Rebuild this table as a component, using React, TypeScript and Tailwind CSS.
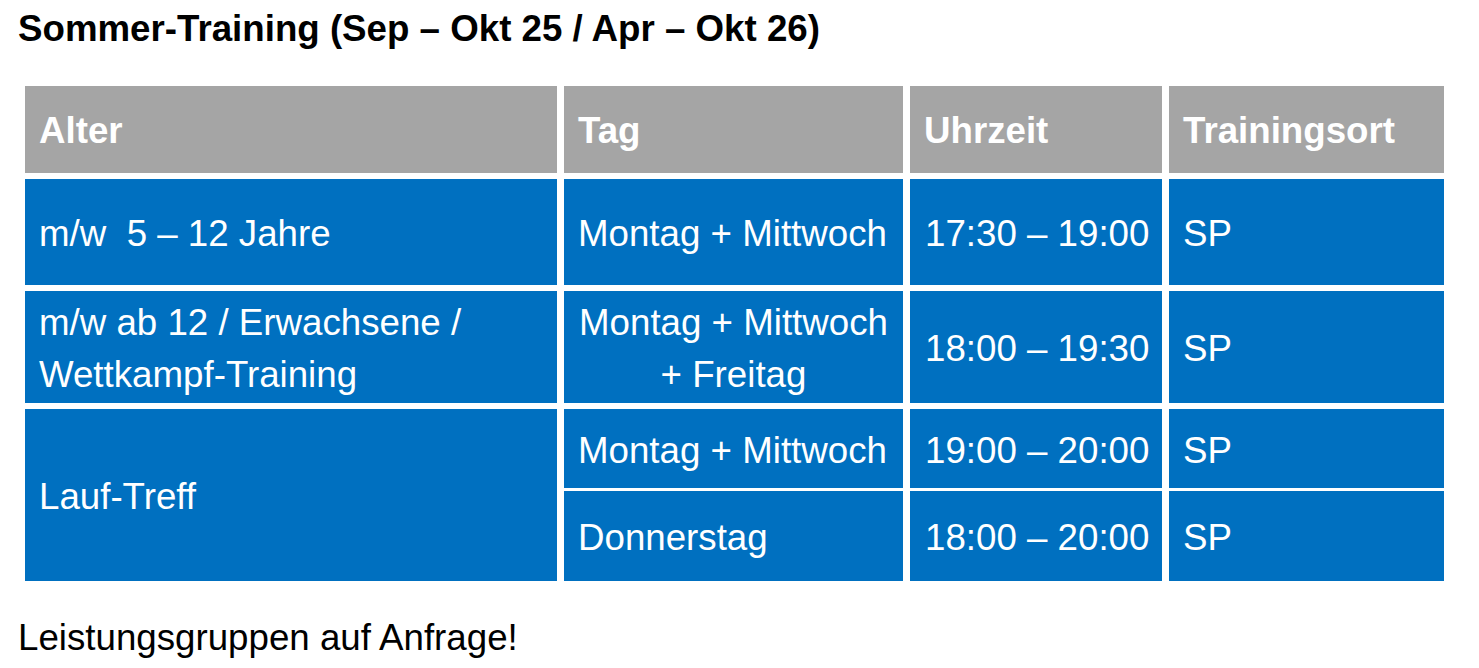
const headers = ["Alter", "Tag", "Uhrzeit", "Trainingsort"];

function Cell({ children, className = "" }: { children: React.ReactNode; className?: string }) {
  return (
    <div className={`flex items-center bg-[#0070c0] px-[14px] pt-[4px] text-white ${className}`}>
      {children}
    </div>
  );
}

export default function App() {
  return (
    <div className="min-h-screen bg-white pl-[18px] pt-[8px] font-['Liberation_Sans',Arial,sans-serif] text-[36.7px] text-black">
      <h1 className="font-bold leading-[42px]">Sommer-Training (Sep – Okt 25 / Apr – Okt 26)</h1>

      <div className="ml-[7px] mt-[36px] grid grid-cols-[532px_339px_252px_275px] grid-rows-[87px_106px_112px_172px] gap-x-[7px] gap-y-[6px] leading-[52px]">
        {headers.map((h) => (
          <div key={h} className="flex items-center bg-[#a5a5a5] px-[14px] pt-[2px] font-bold text-white">
            {h}
          </div>
        ))}

        <Cell className="whitespace-pre">{"m/w  5 – 12 Jahre"}</Cell>
        <Cell>Montag + Mittwoch</Cell>
        <Cell className="whitespace-nowrap pl-[15px] pr-0">17:30 – 19:00</Cell>
        <Cell>SP</Cell>

        <Cell>
          m/w ab 12 / Erwachsene /<br />
          Wettkampf-Training
        </Cell>
        <Cell className="justify-center text-center">
          Montag + Mittwoch
          <br />+ Freitag
        </Cell>
        <Cell className="whitespace-nowrap pl-[15px] pr-0">18:00 – 19:30</Cell>
        <Cell>SP</Cell>

        <Cell>Lauf-Treff</Cell>
        <div className="col-span-3 grid grid-cols-subgrid grid-rows-[79px_90px] gap-y-[3px]">
          <Cell>Montag + Mittwoch</Cell>
          <Cell className="whitespace-nowrap pl-[15px] pr-0">19:00 – 20:00</Cell>
          <Cell>SP</Cell>
          <Cell>Donnerstag</Cell>
          <Cell className="whitespace-nowrap pl-[15px] pr-0">18:00 – 20:00</Cell>
          <Cell>SP</Cell>
        </div>
      </div>

      <p className="mt-[36px] leading-[42px]">Leistungsgruppen auf Anfrage!</p>
    </div>
  );
}
